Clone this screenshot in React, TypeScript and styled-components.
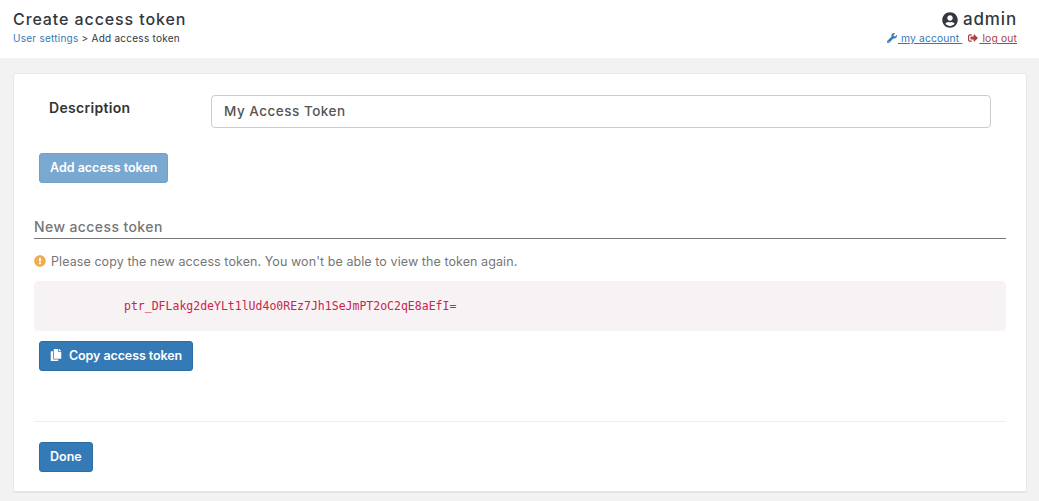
import React from "react";
import styled, { createGlobalStyle } from "styled-components";
import { FaUserCircle, FaWrench, FaSignOutAlt, FaCopy, FaExclamationCircle } from "react-icons/fa";

const Global = createGlobalStyle`
  html, body { margin: 0; padding: 0; background: #f2f2f2; }
  body { font-family: Inter, "Liberation Sans", sans-serif; color: #333; }
`;

const Page = styled.div`
  width: 1039px;
  height: 501px;
  overflow: hidden;
`;

const Header = styled.header`
  height: 58px;
  background: #fff;
  display: flex;
  justify-content: space-between;
  padding: 10px 22px 0 13px;
  box-sizing: border-box;
`;

const TitleBlock = styled.div`
  display: flex;
  flex-direction: column;
`;

const Title = styled.div`
  font-size: 16px;
  font-weight: 500;
  line-height: 19px;
  letter-spacing: 0.9px;
  color: #333840;
`;

const Crumbs = styled.div`
  font-size: 10px;
  line-height: 14px;
  margin-top: 2px;
  letter-spacing: 0.25px;
  color: #333840;
`;

const CrumbLink = styled.span`
  color: #337ab7;
`;

const UserBlock = styled.div`
  display: flex;
  flex-direction: column;
  align-items: flex-end;
`;

const UserName = styled.div`
  display: flex;
  align-items: center;
  gap: 5px;
  font-size: 17px;
  font-weight: 500;
  line-height: 19px;
  letter-spacing: 0.85px;
  color: #333840;
`;

const UserLinks = styled.div`
  display: flex;
  gap: 6px;
  font-size: 10.3px;
  line-height: 14px;
  margin-top: 2px;
  letter-spacing: 0.15px;
`;

const UserLink = styled.span<{ $color: string }>`
  display: flex;
  align-items: center;
  color: ${(p) => p.$color};
  white-space: pre;
  svg { margin-right: 1px; }
  span { text-decoration: underline; }
`;

const Card = styled.main`
  box-sizing: border-box;
  width: 1014px;
  height: 420px;
  margin: 15px 0 0 13px;
  background: #fff;
  border: 1px solid #e8e8e8;
  border-bottom: 2px solid #e4e4e4;
  border-radius: 3px;
  padding: 21px 20px 0 20px;
`;

const FieldRow = styled.div`
  display: flex;
  align-items: flex-start;
  height: 34px;
  padding-left: 15px;
`;

const FieldLabel = styled.label`
  width: 162px;
  font-size: 14px;
  font-weight: 600;
  line-height: 26px;
  letter-spacing: 0.3px;
  color: #333;
`;

const TextInput = styled.input`
  box-sizing: border-box;
  width: 780px;
  height: 33px;
  border: 1px solid #ccc;
  border-radius: 4px;
  padding: 0 12px 2px;
  font-family: inherit;
  font-size: 13.5px;
  font-weight: 500;
  letter-spacing: 0.5px;
  color: #555;
  background: #fff;
  outline: none;
`;

const Button = styled.button<{ $disabled?: boolean }>`
  display: inline-flex;
  align-items: center;
  box-sizing: border-box;
  height: 30px;
  padding: 0 10px 2px;
  border: 1px solid #2e6da4;
  border-radius: 3px;
  background: #337ab7;
  color: #fff;
  font-family: inherit;
  font-size: 12.5px;
  font-weight: 600;
  opacity: ${(p) => (p.$disabled ? 0.65 : 1)};
`;

const AddRow = styled.div`
  margin: 24px 0 0 5px;
`;

const SectionTitle = styled.div`
  margin-top: 35px;
  height: 20px;
  border-bottom: 1px solid #777;
  font-size: 14px;
  font-weight: 500;
  line-height: 18px;
  letter-spacing: 0.4px;
  color: #767676;
`;

const Notice = styled.div`
  display: flex;
  align-items: center;
  gap: 5px;
  margin-top: 14px;
  height: 16px;
  font-size: 12.5px;
  color: #767676;
  letter-spacing: 0.08px;
`;

const CodeBox = styled.pre`
  box-sizing: border-box;
  margin: 12px 0 0;
  height: 50px;
  background: #f7f2f4;
  border-radius: 4px;
  padding: 0 0 0 90px;
  font-family: "DejaVu Sans Mono", monospace;
  font-size: 11.5px;
  line-height: 50px;
  color: #c7254e;
`;

const CopyRow = styled.div`
  margin: 10px 0 0 5px;
  svg { margin-right: 7px; }
  button { letter-spacing: -0.1px; }
`;

const Rule = styled.hr`
  margin: 50px 0 0;
  border: 0;
  border-top: 1px solid #eee;
`;

const DoneRow = styled.div`
  margin: 20px 0 0 5px;
`;

export default function App() {
  return (
    <Page>
      <Global />
      <Header>
        <TitleBlock>
          <Title>Create access token</Title>
          <Crumbs>
            <CrumbLink>User settings</CrumbLink> &gt; Add access token
          </Crumbs>
        </TitleBlock>
        <UserBlock>
          <UserName>
            <FaUserCircle size={16} />
            admin
          </UserName>
          <UserLinks>
            <UserLink $color="#337ab7">
              <FaWrench size={10} />
              <span> my account </span>
            </UserLink>
            <UserLink $color="#a94442">
              <FaSignOutAlt size={10} />
              <span> log out</span>
            </UserLink>
          </UserLinks>
        </UserBlock>
      </Header>
      <Card>
        <FieldRow>
          <FieldLabel>Description</FieldLabel>
          <TextInput readOnly value="My Access Token" />
        </FieldRow>
        <AddRow>
          <Button $disabled>Add access token</Button>
        </AddRow>
        <SectionTitle>New access token</SectionTitle>
        <Notice>
          <FaExclamationCircle size={12} color="#f0ad4e" />
          Please copy the new access token. You won't be able to view the token again.
        </Notice>
        <CodeBox>ptr_DFLakg2deYLt1lUd4o0REz7Jh1SeJmPT2oC2qE8aEfI=</CodeBox>
        <CopyRow>
          <Button>
            <FaCopy size={12} />
            Copy access token
          </Button>
        </CopyRow>
        <Rule />
        <DoneRow>
          <Button>Done</Button>
        </DoneRow>
      </Card>
    </Page>
  );
}
